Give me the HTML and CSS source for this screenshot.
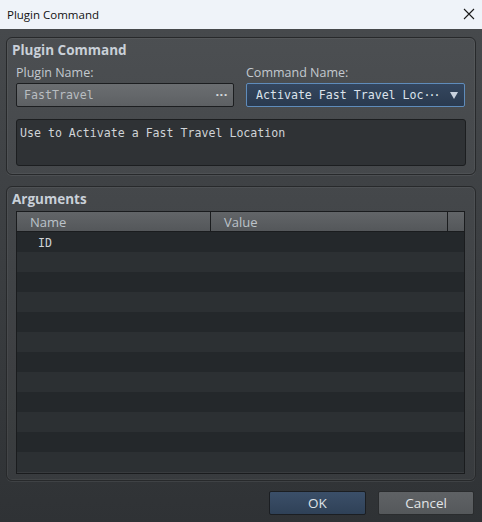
FILE: index.html
```html
<!DOCTYPE html>
<html>
<head>
<meta charset="utf-8">
<link rel="stylesheet" href="styles.css">
</head>
<body>
<div class="window">
  <div class="titlebar">
    <span class="title">Plugin Command</span>
    <svg class="close" width="12" height="12" viewBox="0 0 12 12"><path d="M1 1L11 11M11 1L1 11" stroke="#1a1a1a" stroke-width="1.1" fill="none"/></svg>
  </div>
  <div class="content">
    <section class="group group-cmd">
      <div class="group-title">Plugin Command</div>
      <div class="fields">
        <div class="field-col">
          <div class="label">Plugin Name:</div>
          <div class="input plugin-input"><span class="mono">FastTravel</span><span class="more">···</span></div>
        </div>
        <div class="field-col">
          <div class="label">Command Name:</div>
          <div class="input combo"><span class="mono">Activate Fast Travel Loc<span class="ell">···</span></span><svg class="arrow" width="8" height="7" viewBox="0 0 8 7"><path d="M0 0H8L4 7Z" fill="#c9d2de"/></svg></div>
        </div>
      </div>
      <div class="desc mono">Use to Activate a Fast Travel Location</div>
    </section>
    <section class="group group-args">
      <div class="group-title">Arguments</div>
      <div class="table">
        <div class="thead">
          <div class="th c-name">Name</div>
          <div class="th c-value">Value</div>
          <div class="th c-extra"></div>
        </div>
        <div class="tbody">
          <div class="row"><span class="mono cell-name">ID</span></div>
          <div class="row"></div>
          <div class="row"></div>
          <div class="row"></div>
          <div class="row"></div>
          <div class="row"></div>
          <div class="row"></div>
          <div class="row"></div>
          <div class="row"></div>
          <div class="row"></div>
          <div class="row"></div>
          <div class="row"></div>
        </div>
      </div>
    </section>
    <div class="buttons">
      <button class="btn ok">OK</button>
      <button class="btn cancel">Cancel</button>
    </div>
  </div>
</div>
</body>
</html>
```
FILE: styles.css
```css
* { box-sizing: border-box; }
html, body { margin: 0; padding: 0; }
body { width: 482px; height: 522px; overflow: hidden; font-family: "Open Sans", "Noto Sans", sans-serif; }

.window { width: 482px; height: 522px; display: flex; flex-direction: column; }

.titlebar {
  height: 29px; flex: none;
  background: #eff3f9;
  display: flex; align-items: center; justify-content: space-between;
  padding: 0 7px 1px 7px;
}
.title { font-size: 11.5px; color: #111; }

.content {
  flex: 1;
  background: linear-gradient(#46494c, #2f3235);
  padding: 8px 6px 8px 6px;
  display: flex; flex-direction: column;
}

.group {
  border: 1px solid #27292b;
  border-radius: 6px;
  background: rgba(255,255,255,0.035);
  box-shadow: inset 0 0 0 1px rgba(255,255,255,0.05), 0 1px 0 rgba(255,255,255,0.07);
}
.group-title {
  font-weight: 700; font-size: 13.5px; line-height: 16px;
  color: #c9d0d8;
  padding: 4px 0 0 5px;
}

.group-cmd { height: 138px; padding: 0 9px 0 0; }

.fields { display: grid; grid-template-columns: 218px 219px; column-gap: 12px; margin: 7px 0 0 9px; }
.label { font-size: 12.5px; line-height: 15px; color: #c3c9cf; margin-bottom: 3px; }

.mono { font-family: "DejaVu Sans Mono", monospace; font-size: 11.6px; }

.input {
  height: 24px; border: 1px solid #1c1e20; border-radius: 2px;
  display: flex; align-items: center; justify-content: space-between;
}
.plugin-input {
  background: linear-gradient(#6b6e71, #5d6063);
  padding: 0 5px 0 7px; color: #b9bdc1;
}
.more { font-size: 13px; font-weight: 700; color: #d6dade; letter-spacing: 0.5px; margin-top: -3px; }
.combo {
  background: linear-gradient(#34465e, #2a3a4f);
  border-color: #5f8cbb;
  padding: 0 6px 0 9px; color: #dce3ec;
}
.ell { letter-spacing: -2px; }

.desc {
  margin: 12px 0 0 9px; height: 47px;
  background: #2f3235; border: 1px solid #1c1e20; border-radius: 3px;
  color: #d0d4d8; line-height: 14px; padding: 6px 3px;
}

.group-args { margin-top: 11px; height: 295px; display: flex; flex-direction: column; padding: 0 10px 6px 9px; }
.group-args .group-title { padding-left: 5px; margin-left: -9px; height: 24px; }

.table { flex: 1; border: 1px solid #1a1c1e; display: flex; flex-direction: column; overflow: hidden; }
.thead {
  height: 20px; flex: none; display: flex;
  background: linear-gradient(#626568, #54575a);
  border-bottom: 1px solid #1a1c1e;
}
.th { font-size: 13px; line-height: 19px; padding-top: 1px; color: #bcc3ca; }
.c-name { width: 194px; padding-left: 13px; border-right: 1px solid #1a1c1e; }
.c-value { flex: 1; padding-left: 13px; border-right: 1px solid #1a1c1e; }
.c-extra { width: 16px; }

.tbody { flex: 1; overflow: hidden; }
.row { height: 20px; background: #2c3033; display: flex; align-items: center; }
.row:nth-child(odd) { background: #24282b; }
.cell-name { color: #cfd3d7; padding-left: 21px; line-height: 20px; padding-top: 1px; }

.buttons { display: flex; justify-content: flex-end; gap: 12px; margin-top: 10px; padding-right: 2px; }
.btn {
  height: 24px; width: 97px; border-radius: 2px;
  font-family: "Open Sans", sans-serif; font-size: 13.5px; color: #dfe3e8;
  padding: 0; line-height: 20px;
}
.ok { background: linear-gradient(#3b4f69, #2f4157); border: 1px solid #1b1e22; }
.cancel { width: 96px; background: linear-gradient(#5f6265, #55585b); border: 1px solid #2a2c2e; color: #e2e5e8; }
```
